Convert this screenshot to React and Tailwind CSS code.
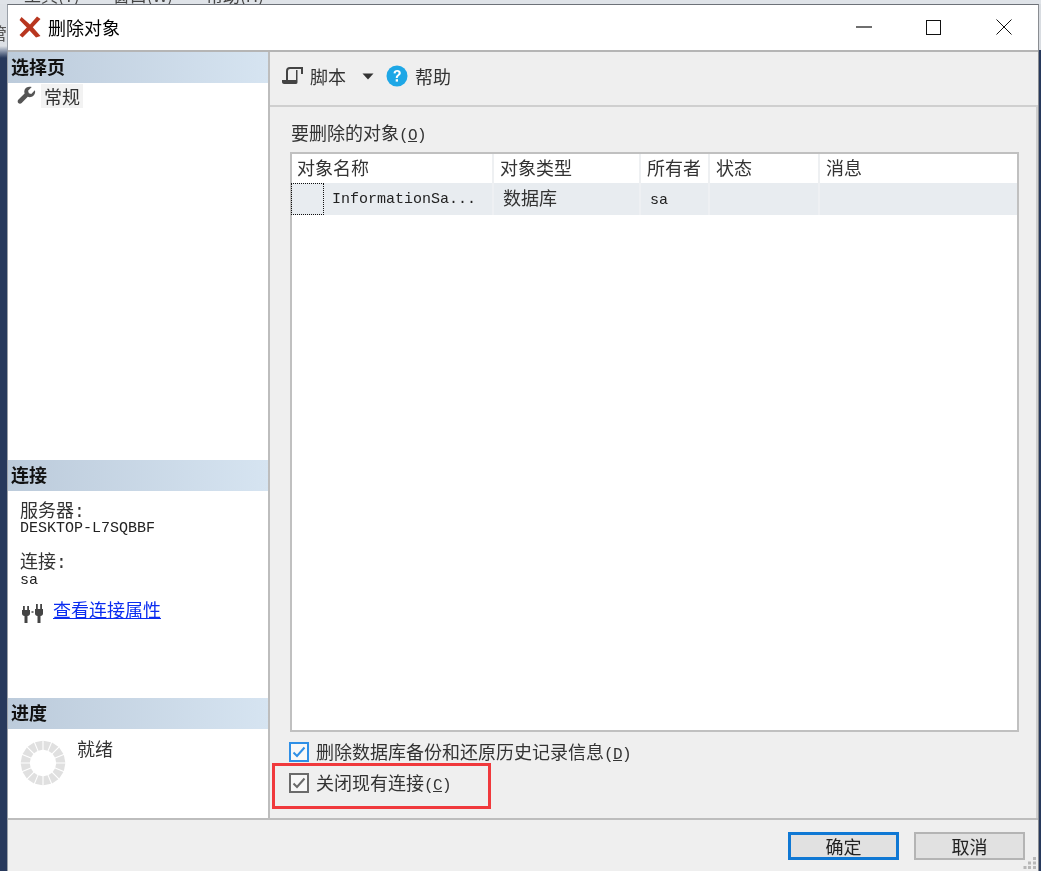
import React from "react";

const mono = { fontFamily: '"Liberation Mono", monospace' };

function PaneHeader({ children }) {
  return (
    <div className="h-[31px] shrink-0 flex items-center pl-[3px] pb-[4px] bg-gradient-to-r from-[#bccbdb] to-[#d6e4f1] text-[18px] font-bold text-[#111] leading-none">
      {children}
    </div>
  );
}

function Check({ blue }) {
  const edge = blue ? "#2f8fe6" : "#6b6b6b";
  return (
    <svg width="20" height="20" viewBox="0 0 20 20" className="shrink-0 ml-[-1px]">
      <rect x="1" y="1" width="18" height="18" fill="#f8f8f8" stroke={edge} strokeWidth="2" />
      <path d="M4.5 10.5 L8 14 L15.5 5.5" fill="none" stroke={edge} strokeWidth="2" />
    </svg>
  );
}

function Accel({ k }) {
  return (
    <span style={mono} className="text-[16px] tracking-[-0.6px] leading-none">
      (<span className="underline">{k}</span>)
    </span>
  );
}

function Spinner() {
  const segs = [];
  for (let i = 0; i < 16; i++) {
    segs.push(
      <path
        key={i}
        d="M19.2 1 L26.8 1 L25 10 L21 10 Z"
        transform={`rotate(${i * 22.5 + 11.25} 23 23)`}
        fill="#e0e0e0"
      />
    );
  }
  return (
    <svg width="46" height="46" viewBox="0 0 46 46" className="shrink-0">
      {segs}
    </svg>
  );
}

function HeadCell({ w, pad = "pl-[6px]", children }) {
  return (
    <div className={`${w} ${pad} shrink-0 h-[29px] pb-[3px] flex items-center border-r-2 border-[#eef0f2] text-[18px] text-[#333] leading-none`}>
      {children}
    </div>
  );
}

function RowCell({ w, className = "", children }) {
  return (
    <div className={`${w} shrink-0 h-[32px] flex items-center border-r-2 border-[#eef0f3] ${className}`}>
      {children}
    </div>
  );
}

export default function App() {
  return (
    <div
      className="relative w-[1041px] h-[871px] overflow-hidden bg-[#27395c] flex flex-col blur-[0.35px] text-[#222]"
      style={{ fontFamily: '"Noto Sans CJK SC", "Liberation Sans", sans-serif' }}
    >
      <div className="h-[4px] shrink-0 bg-[#dfe3e8] overflow-hidden relative">
        <div className="flex text-[17px] leading-none text-[#444] mt-[-14px] pl-[24px] gap-[33px]">
          <span>工具(T)</span>
          <span>窗口(W)</span>
          <span>帮助(H)</span>
        </div>
      </div>
      <div className="flex-1 flex min-h-0">
        <div className="w-[7px] shrink-0 flex flex-col">
          <div className="h-[42px] bg-[#dde1e6] overflow-hidden text-[17px] text-[#555] leading-none pt-[20px]">
            <span className="block ml-[-10px]">管</span>
          </div>
          <div className="h-[12px] bg-gradient-to-b from-[#dde1e6] to-[#27395c]" />
        </div>
        <div className="w-[1032px] shrink-0 flex flex-col bg-[#efefef] border-t border-[#6d7178] border-r border-r-[#8a8d92] border-l border-l-[#9aa0a8]">
          {/* title bar */}
          <div className="h-[47px] shrink-0 bg-white border-b-2 border-[#b5b5b5] flex items-center pb-[1px]">
            <svg width="22" height="22" viewBox="0 0 22 22" className="ml-[11px] shrink-0">
              <path d="M2.5 1 L11 8.5 L18 0.5 L21.5 3 L13.8 11.3 L21.5 20 L17 21.5 L10.5 14.5 L3.5 21.5 L0.5 19 L7.8 11.5 L0.5 4 Z" fill="#b8361f" />
            </svg>
            <span className="ml-[7px] text-[18px] text-black leading-none">删除对象</span>
            <div className="flex-1" />
            <svg width="16" height="2" viewBox="0 0 16 2" className="shrink-0 mr-[54px]">
              <rect width="16" height="1.2" y="0.4" fill="#111" />
            </svg>
            <div className="w-[15px] h-[15px] border border-[#111] shrink-0 mr-[55px]" />
            <svg width="16" height="16" viewBox="0 0 16 16" className="shrink-0 mr-[26px]">
              <path d="M0.5 0.5 L15.5 15.5 M15.5 0.5 L0.5 15.5" stroke="#111" strokeWidth="1" fill="none" />
            </svg>
          </div>

          {/* body */}
          <div className="h-[768px] shrink-0 flex border-b-2 border-[#bdbdbd]">
            {/* left panel */}
            <div className="w-[262px] shrink-0 bg-white border-r-2 border-[#bdbdbd] flex flex-col">
              <PaneHeader>选择页</PaneHeader>
              <div className="h-[26px] shrink-0 flex items-center pl-[9px]">
                <svg width="19" height="19" viewBox="0 0 24 24" className="shrink-0 mt-[-1px]">
                  <path
                    d="M22.5 5.5 L18 10 L15 9 L14 6 L18.6 1.4 C15 0 11 1.5 9.6 4.8 C9 6.6 9 8.2 9.6 9.6 L1.6 17.4 C0.6 18.5 0.6 20.4 1.6 21.4 C2.8 22.6 4.8 22.6 5.9 21.4 L13.6 13.6 C16 14.6 19 14 21 12 C22.8 10.2 23.4 7.7 22.5 5.5 Z"
                    fill="#555"
                  />
                </svg>
                <span className="ml-[5px] mt-[-1px] px-[3px] bg-[#f2f2f2] text-[18px] leading-[24px] text-[#333]">常规</span>
              </div>
              <div className="h-[351px] shrink-0" />
              <PaneHeader>连接</PaneHeader>
              <div className="h-[207px] shrink-0 pl-[12px] pt-[7px] flex flex-col">
                <span className="text-[18px] leading-[22px] text-[#333]">服务器<span style={mono} className="leading-none">:</span></span>
                <span className="mt-[1px] text-[15px] leading-[14px] text-[#222]" style={mono}>DESKTOP-L7SQBBF</span>
                <span className="mt-[13px] text-[18px] leading-[22px] text-[#333]">连接<span style={mono} className="leading-none">:</span></span>
                <span className="mt-[2px] text-[15px] leading-[14px] text-[#222]" style={mono}>sa</span>
                <div className="mt-[10px] flex items-start">
                  <svg width="22" height="21" viewBox="0 0 22 21" className="shrink-0 mt-[5px] ml-[2px]">
                    <path d="M1 3 H2.8 V7 H5.2 V3 H7 V7 H8 V10.5 C8 12 7 12.8 5.5 13 V20 H2.5 V13 C1 12.8 0 12 0 10.5 V7 H1 Z" fill="#444" />
                    <path d="M14 1 H15.8 V6 H18.2 V1 H20 V6 H21 V10.5 C21 12 20 12.8 18.5 13 V20 H15.5 V13 C14 12.8 13 12 13 10.5 V6 H14 Z" fill="#444" />
                    <rect x="9.5" y="8" width="2" height="2" fill="#777" />
                  </svg>
                  <a className="ml-[9px] text-[18px] leading-[22px] text-[#0a2cf0] underline">查看连接属性</a>
                </div>
              </div>
              <PaneHeader>进度</PaneHeader>
              <div className="flex-1 pl-[12px] flex">
                <div className="pt-[11px]">
                  <Spinner />
                </div>
                <span className="ml-[11px] text-[18px] leading-[22px] text-[#333] mt-[8px]">就绪</span>
              </div>
            </div>

            {/* right panel */}
            <div className="flex-1 flex flex-col min-w-0">
              <div className="h-[55px] shrink-0 border-b-2 border-[#cfcfcf] flex items-center pl-[12px] pb-[5px] text-[18px] text-[#333] leading-none">
                <svg width="22" height="18" viewBox="0 0 22 18" className="shrink-0">
                  <path d="M5 13 V4 C5 2 6 1 8 1 H20 M20 0 V7" fill="none" stroke="#444" strokeWidth="2" />
                  <path d="M0 13 H14 V3 H15.5 V15 C15.5 16 15 17 14 17 H2 C1 17 0 16 0 15 Z" fill="#444" />
                </svg>
                <span className="ml-[6px]">脚本</span>
                <svg width="12" height="7" viewBox="0 0 12 7" className="ml-[16px] shrink-0">
                  <path d="M0.5 0.5 H11.5 L6 6.5 Z" fill="#333" />
                </svg>
                <svg width="22" height="22" viewBox="0 0 22 22" className="ml-[12px] shrink-0">
                  <circle cx="11" cy="11" r="10.5" fill="#1ea7e6" />
                  <path d="M7.5 8.2 C7.7 6 9.2 5 11.2 5 C13.3 5 14.8 6.2 14.8 8 C14.8 9.5 13.8 10.2 12.8 10.9 C12 11.5 11.8 12 11.8 13 H9.8 C9.8 11.5 10.2 10.6 11.4 9.8 C12.2 9.2 12.6 8.8 12.6 8.1 C12.6 7.3 12 6.8 11.1 6.8 C10.2 6.8 9.7 7.4 9.6 8.4 Z" fill="#fff" />
                  <rect x="9.7" y="14.2" width="2.3" height="2.4" fill="#fff" />
                </svg>
                <span className="ml-[7px]">帮助</span>
              </div>

              <div className="flex-1 min-h-0 pl-[20px] pr-[17px] flex flex-col border-r-2 border-[#cfcfcf]">
                <div className="h-[45px] shrink-0 flex items-end pb-[8px] pl-[1px] text-[18px] leading-[22px] text-[#333]">
                  <span>要删除的对象<Accel k="O" /></span>
                </div>
                {/* list */}
                <div className="h-[580px] shrink-0 bg-white border-2 border-[#c0c0c0] flex flex-col">
                  <div className="flex shrink-0">
                    <HeadCell w="w-[202px]" pad="pl-[5px]">对象名称</HeadCell>
                    <HeadCell w="w-[147px]">对象类型</HeadCell>
                    <HeadCell w="w-[69px]">所有者</HeadCell>
                    <HeadCell w="w-[110px]">状态</HeadCell>
                    <div className="flex-1 h-[29px] pl-[6px] pb-[3px] flex items-center text-[18px] text-[#333] leading-none">消息</div>
                  </div>
                  <div className="flex shrink-0 bg-[#e8ecf0]">
                    <RowCell w="w-[202px]">
                      <div className="w-[33px] h-[32px] shrink-0 border border-dotted border-[#111] ml-[-1px]" />
                      <span className="ml-[8px] text-[15px] leading-none text-[#222]" style={mono}>InformationSa...</span>
                    </RowCell>
                    <RowCell w="w-[147px]" className="pl-[9px] pb-[4px] text-[18px] leading-none text-[#333]">数据库</RowCell>
                    <RowCell w="w-[69px]" className="pl-[9px] pt-[2px]">
                      <span className="text-[15px] leading-none" style={mono}>sa</span>
                    </RowCell>
                    <RowCell w="w-[110px]" />
                    <div className="flex-1 h-[32px]" />
                  </div>
                </div>
                {/* checks */}
                <div className="mt-[9px] h-[22px] shrink-0 flex items-center text-[18px] leading-none text-[#333]">
                  <Check blue />
                  <span className="ml-[7px]">删除数据库备份和还原历史记录信息<Accel k="D" /></span>
                </div>
                <div className="relative mt-[9px] h-[22px] shrink-0 flex items-center text-[18px] leading-none text-[#333]">
                  <div className="absolute left-[-18px] top-[-9px] w-[219px] h-[46px] border-[3px] border-[#f0393c]" />
                  <Check />
                  <span className="ml-[7px]">关闭现有连接<Accel k="C" /></span>
                </div>
              </div>
            </div>
          </div>

          {/* footer */}
          <div className="flex-1 min-h-0 relative flex justify-end items-start pt-[12px] pr-[13px] gap-[15px]">
            <button className="w-[111px] h-[28px] bg-[#e1e1e1] border-[3px] border-[#0f78d4] text-[18px] leading-none text-[#222] flex items-center justify-center">确定</button>
            <button className="w-[111px] h-[28px] bg-[#e1e1e1] border-2 border-[#b4b4b4] text-[18px] leading-none text-[#222] flex items-center justify-center">取消</button>
            <svg width="14" height="14" viewBox="0 0 14 14" className="absolute right-[1px] bottom-[1px]">
              <g fill="#b8b8b8">
                <rect x="10" y="1" width="3" height="3" />
                <rect x="5" y="5.5" width="3" height="3" />
                <rect x="10" y="5.5" width="3" height="3" />
                <rect x="0.5" y="10" width="3" height="3" />
                <rect x="5" y="10" width="3" height="3" />
                <rect x="10" y="10" width="3" height="3" />
              </g>
            </svg>
          </div>
        </div>
        <div className="flex-1 flex flex-col">
          <div className="h-[46px] bg-[#d8dce1]" />
          <div className="flex-1 bg-[#27395c]" />
        </div>
      </div>
    </div>
  );
}
